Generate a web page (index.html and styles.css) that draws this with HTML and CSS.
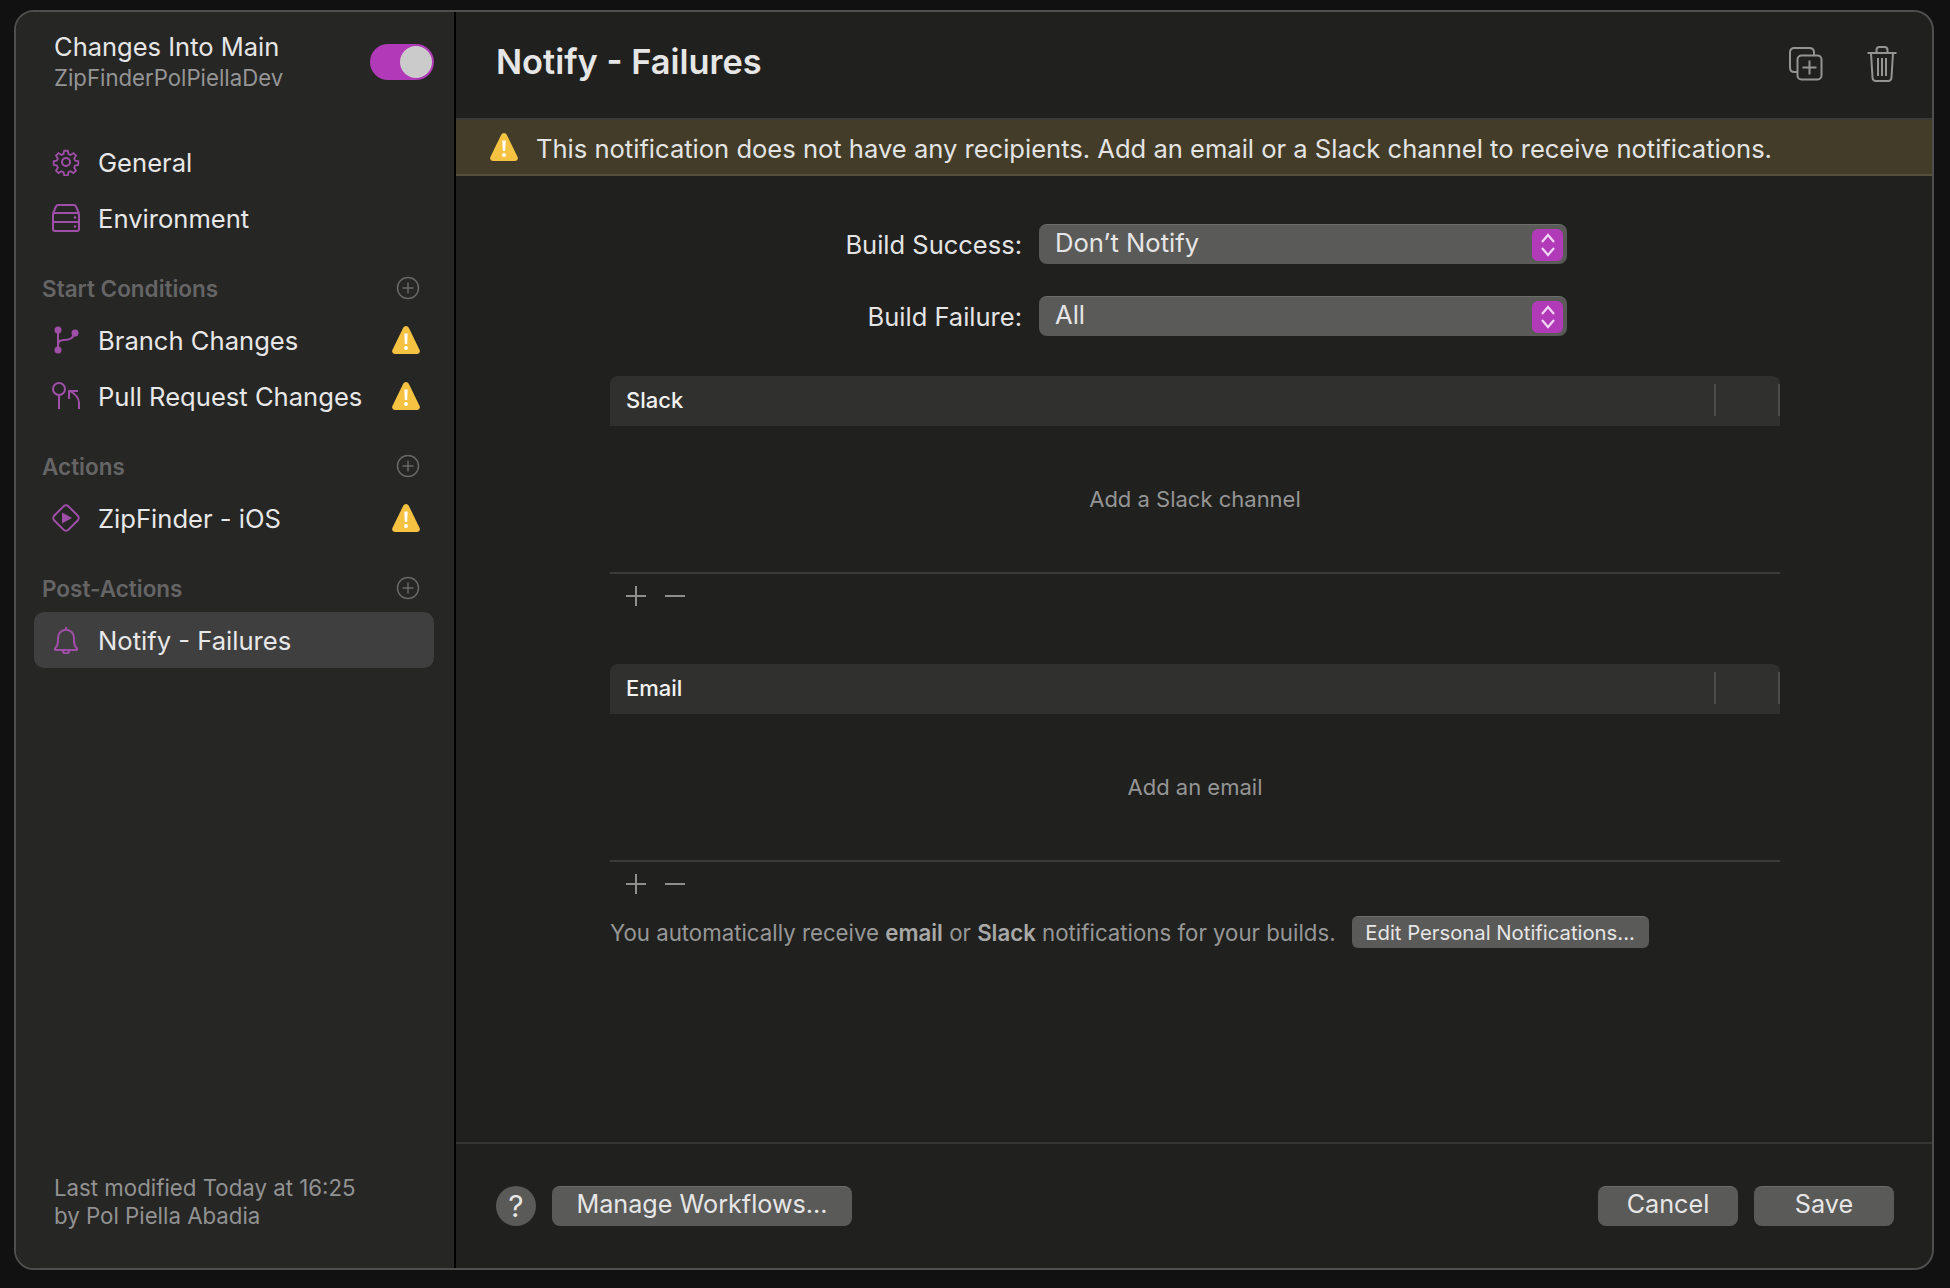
FILE: index.html
```html
<!DOCTYPE html>
<html>
<head>
	<meta charset="utf-8">
	<title>Notify - Failures</title>
	<link rel="stylesheet" href="styles.css">
</head>
<body>
	<div class="window">
		<aside class="sidebar">
			<div class="wfHead">
				<div>
					<div class="wfName">Changes Into Main</div>
					<div class="wfRepo">ZipFinderPolPiellaDev</div>
				</div>
				<div class="toggle"><span class="knob"></span></div>
			</div>
			<div class="navGroup">
				<div class="navItem">
					<svg class="navIcon" viewBox="0 0 28 28"><circle cx="14" cy="14" r="4"/><path d="M12 1.500h4l.8 3.600 2.300 1 3.200-2 2.800 2.800-2 3.200 1 2.300 3.600.8v4l-3.600.8-1 2.300 2 3.200-2.800 2.800-3.200-2-2.300 1-.8 3.600h-4l-.8-3.600-2.300-1-3.200 2-2.800-2.800 2-3.200-1-2.300-3.600-.8v-4l3.600-.8 1-2.300-2-3.200 2.800-2.800 3.200 2 2.300-1z" transform="translate(1.400 1.400) scale(.9)"/></svg>
					<span>General</span>
				</div>
				<div class="navItem">
					<svg class="navIcon" viewBox="0 0 28 28"><path d="M1 9.500 4 2.500Q4.500 1 6.500 1h15q2 0 2.500 1.500l3 7"/><rect x="1" y="9" width="26" height="18" rx="2"/><path d="M1 18h26"/><circle class="dot" cx="23" cy="13.500" r="1.300"/><circle class="dot" cx="23" cy="22.500" r="1.300"/></svg>
					<span>Environment</span>
				</div>
			</div>
			<div class="navTitle">
				<span>Start Conditions</span>
				<svg class="addIcon" viewBox="0 0 24 24"><circle cx="12" cy="12" r="10.500"/><path d="M12 6.500v11M6.500 12h11"/></svg>
			</div>
			<div class="navItem">
				<svg class="navIcon" viewBox="0 0 28 28"><path d="M6 4v20M6 19q0-5 6-5 9 0 11-7"/><circle class="dot" cx="6" cy="4" r="3.500"/><circle class="dot" cx="23" cy="7" r="3.500"/><circle class="dot" cx="6" cy="24" r="3.500"/></svg>
				<span class="navText">Branch Changes</span>
				<svg class="warnIcon" viewBox="0 0 28 28"><use href="#warn"/></svg>
			</div>
			<div class="navItem">
				<svg class="navIcon" viewBox="0 0 28 28"><circle cx="7" cy="7" r="6"/><path d="M7 13v14M27 27v-6q0-7-9-12M17 17V9h9"/></svg>
				<span class="navText">Pull Request Changes</span>
				<svg class="warnIcon" viewBox="0 0 28 28"><use href="#warn"/></svg>
			</div>
			<div class="navTitle">
				<span>Actions</span>
				<svg class="addIcon" viewBox="0 0 24 24"><circle cx="12" cy="12" r="10.500"/><path d="M12 6.500v11M6.500 12h11"/></svg>
			</div>
			<div class="navItem">
				<svg class="navIcon" viewBox="0 0 28 28"><rect x="4" y="4" width="20" height="20" rx="3.500" transform="rotate(45 14 14)"/><path class="dot" d="M10 8.500 20 14 10 19.500z"/></svg>
				<span class="navText">ZipFinder - iOS</span>
				<svg class="warnIcon" viewBox="0 0 28 28"><use href="#warn"/></svg>
			</div>
			<div class="navTitle">
				<span>Post-Actions</span>
				<svg class="addIcon" viewBox="0 0 24 24"><circle cx="12" cy="12" r="10.500"/><path d="M12 6.500v11M6.500 12h11"/></svg>
			</div>
			<div class="navItem navItemOn">
				<svg class="navIcon" viewBox="0 0 28 28"><path d="M3 22.500q3-3 3-7.500v-3q0-7 8-8.500 8 1.500 8 8.500v3q0 4.500 3 7.500 .5 1.500-1 1.500h-20q-1.500 0-1-1.500zM14 1v2.500M10.500 24q.5 3.500 3.500 3.500t3.500-3.500"/></svg>
				<span>Notify - Failures</span>
			</div>
			<div class="modified">Last modified Today at 16:25<br>by Pol Piella Abadia</div>
		</aside>
		<main class="main">
			<header class="mainHead">
				<h1>Notify - Failures</h1>
				<div class="headIcons">
					<svg class="dupIcon" viewBox="0 0 34 34"><path d="M8 25H5.500Q1 25 1 20.500v-15Q1 1 5.500 1h15Q25 1 25 5.500V8"/><rect x="8.500" y="8.500" width="24" height="24" rx="4"/><path d="M20.500 13.500v14M13.500 20.500h14"/></svg>
					<svg class="trashIcon" viewBox="0 0 30 36"><path d="M.5 7h29M9.500 7V4q0-3 3-3h5q3 0 3 3v3M4 7l1.500 24.500q.2 3.500 3.500 3.500h12q3.300 0 3.500-3.500L26 7M11 12v18M15 12v18M19 12v18"/></svg>
				</div>
			</header>
			<div class="banner">
				<svg class="warnIcon" viewBox="0 0 28 28"><use href="#warn"/></svg>
				<span class="bannerText">This notification does not have any recipients. Add an email or a Slack channel to receive notifications.</span>
			</div>
			<div class="content">
				<div class="formRow">
					<label>Build Success:</label>
					<div class="select">
						<span>Don’t Notify</span>
						<span class="stepper"><svg viewBox="0 0 16 28"><path d="M2 11 8 4l6 7M2 17l6 7 6-7"/></svg></span>
					</div>
				</div>
				<div class="formRow">
					<label>Build Failure:</label>
					<div class="select">
						<span>All</span>
						<span class="stepper"><svg viewBox="0 0 16 28"><path d="M2 11 8 4l6 7M2 17l6 7 6-7"/></svg></span>
					</div>
				</div>
				<section class="list listFirst">
					<div class="listHead"><span>Slack</span><i class="colLine"></i><i class="colLine colLast"></i></div>
					<div class="listBody">Add a Slack channel</div>
					<div class="listTools"><svg viewBox="0 0 60 22"><path d="M11 1v20M1 11h20M40 11h20"/></svg></div>
				</section>
				<section class="list listSecond">
					<div class="listHead"><span>Email</span><i class="colLine"></i><i class="colLine colLast"></i></div>
					<div class="listBody">Add an email</div>
					<div class="listTools"><svg viewBox="0 0 60 22"><path d="M11 1v20M1 11h20M40 11h20"/></svg></div>
				</section>
				<div class="note">
					<span>You automatically receive <b>email</b> or <b>Slack</b> notifications for your builds.</span>
					<button class="btn btnSmall">Edit Personal Notifications...</button>
				</div>
			</div>
			<footer class="mainFoot">
				<button class="help">?</button>
				<button class="btn btnManage">Manage Workflows...</button>
				<div class="footRight">
					<button class="btn btnWide">Cancel</button>
					<button class="btn btnWide">Save</button>
				</div>
			</footer>
		</main>
	</div>
	<svg class="defs" width="0" height="0">
		<symbol id="warn" viewBox="0 0 28 28">
			<path fill="#f5c242" d="M14 0q1.800 0 2.800 1.800L27.600 24q1 3.500-2.400 4H2.800Q-.6 27.500.4 24L11.200 1.800Q12.200 0 14 0z"/>
			<path fill="#fff" d="M12.300 7.500h3.400l-.5 10.500h-2.400z"/>
			<circle fill="#fff" cx="14" cy="22" r="2"/>
		</symbol>
	</svg>
</body>
</html>
```

FILE: styles.css
```css
* {
	box-sizing: border-box;
}
html, body {
	margin: 0;
	height: 100%;
}
body {
	padding: 10px 16px 18px 14px;
	background-color: #111;
	font-family: Inter, "Liberation Sans", sans-serif;
	color: #e4e4e4;
}
.defs {
	display: none;
}
.window {
	display: flex;
	height: 1260px;
	overflow: hidden;
	border: 2px solid #4e4e4e;
	border-radius: 20px;
	background-color: #20201e;
}

/* sidebar */
.sidebar {
	display: flex;
	flex-direction: column;
	width: 440px;
	flex: none;
	padding: 0 20px 0 18px;
	border-right: 2px solid #000;
	background-color: #262625;
}
.wfHead {
	display: flex;
	justify-content: space-between;
	align-items: center;
	height: 86px;
	padding: 13px 0 0 20px;
}
.wfName {
	font-size: 25.500px;
	line-height: 32px;
	color: #e6e6e6;
}
.wfRepo {
	font-size: 22.200px;
	line-height: 30px;
	color: #959595;
}
.toggle {
	display: flex;
	justify-content: flex-end;
	align-items: center;
	width: 64px;
	height: 36px;
	padding-right: 2px;
	border-radius: 18px;
	background-color: #b03ab8;
}
.knob {
	width: 32px;
	height: 32px;
	border-radius: 50%;
	background-color: #cbcbcb;
}
.navGroup {
	margin-top: 36px;
}
.navItem {
	display: flex;
	align-items: center;
	height: 56px;
	padding: 0 14px 0 18px;
	border-radius: 10px;
	font-size: 25.600px;
	color: #e8e8e8;
}
.navItemOn {
	background-color: #403f3f;
}
.navIcon {
	width: 28px;
	height: 28px;
	flex: none;
	margin-right: 18px;
	fill: none;
	stroke: #a04fa8;
	stroke-width: 2;
}
.navIcon .dot {
	fill: #a04fa8;
	stroke: none;
}
.navText {
	flex: 1;
}
.warnIcon {
	width: 28px;
	height: 28px;
	flex: none;
}
.navTitle {
	display: flex;
	justify-content: space-between;
	align-items: center;
	height: 40px;
	margin-top: 22px;
	margin-bottom: 4px;
	padding: 0 14px 0 8px;
	font-size: 22.500px;
	font-weight: 600;
	color: #656565;
}
.addIcon {
	width: 24px;
	height: 24px;
	fill: none;
	stroke: #686868;
	stroke-width: 1.500;
}
.modified {
	margin-top: auto;
	margin-bottom: 38px;
	padding-left: 20px;
	font-size: 22.250px;
	line-height: 28px;
	color: #929292;
}

/* main panel */
.main {
	display: flex;
	flex-direction: column;
	flex: 1;
	min-width: 0;
}
.mainHead {
	display: flex;
	justify-content: space-between;
	align-items: center;
	height: 106px;
	padding: 0 35px 8px 40px;
}
.mainHead h1 {
	margin: 0;
	font-size: 34.400px;
	font-weight: 600;
	color: #e6e6e6;
}
.headIcons {
	display: flex;
	align-items: center;
	gap: 44px;
	padding-top: 6px;
}
.headIcons svg {
	fill: none;
	stroke: #949494;
	stroke-width: 2;
}
.dupIcon {
	width: 34px;
	height: 34px;
}
.trashIcon {
	width: 30px;
	height: 36px;
}
.banner {
	display: flex;
	align-items: center;
	gap: 18px;
	height: 58px;
	padding: 0 0 0 34px;
	border-top: 2px solid #3a3a38;
	border-bottom: 2px solid #55503a;
	background-color: #423c28;
	font-size: 25.550px;
	color: #e4e4e4;
}
.bannerText {
	padding-top: 2px;
}
.content {
	flex: 1;
	padding-top: 48px;
}
.formRow {
	display: flex;
	align-items: center;
	height: 40px;
	margin-bottom: 32px;
}
.formRow label {
	width: 566px;
	margin-right: 17px;
	text-align: right;
	font-size: 25.500px;
	color: #e4e4e4;
}
.select {
	display: flex;
	justify-content: space-between;
	align-items: center;
	width: 528px;
	height: 40px;
	padding: 0 4px 0 16px;
	border-top: 1px solid #6c6c6c;
	border-radius: 8px;
	background-color: #5a5a59;
	font-size: 25.600px;
	color: #e6e6e6;
}
.select > span:first-child {
	padding-bottom: 5px;
}
.stepper {
	display: flex;
	justify-content: center;
	align-items: center;
	width: 31px;
	height: 32px;
	border-radius: 6px;
	background-color: #b03ab8;
}
.stepper svg {
	width: 16px;
	height: 28px;
	fill: none;
	stroke: #f0d6f2;
	stroke-width: 2.200;
}
.list {
	width: 1170px;
	margin-left: 154px;
}
.listFirst {
	margin-top: 40px;
}
.listSecond {
	margin-top: 48px;
}
.listHead {
	display: flex;
	align-items: center;
	height: 50px;
	padding-left: 16px;
	padding-bottom: 2px;
	border-radius: 8px 8px 0 0;
	background-color: #30302f;
	font-size: 22px;
	font-weight: 500;
	color: #f2f2f2;
}
.listHead span {
	flex: 1;
}
.colLine {
	width: 2px;
	height: 32px;
	margin-right: 62px;
	background-color: #4c4c4c;
}
.colLast {
	margin-right: 0;
}
.listBody {
	display: flex;
	justify-content: center;
	align-items: center;
	height: 148px;
	border-bottom: 2px solid #3c3c3b;
	font-size: 22px;
	color: #959595;
}
.listTools {
	display: flex;
	align-items: center;
	height: 42px;
	padding: 2px 0 0 15px;
}
.listTools svg {
	width: 60px;
	height: 22px;
	fill: none;
	stroke: #8f8f8f;
	stroke-width: 2;
}
.note {
	display: flex;
	align-items: center;
	gap: 16px;
	margin-top: 12px;
	margin-left: 154px;
	font-size: 22.250px;
	color: #979797;
}
.note b {
	font-weight: 600;
	color: #a8a8a8;
}
.btn {
	height: 40px;
	padding: 0 0 5px;
	border: 0 none;
	border-top: 1px solid #6c6c6c;
	border-radius: 8px;
	background-color: #5a5a59;
	font-family: inherit;
	font-size: 25.200px;
	color: #e6e6e6;
}
.btnSmall {
	width: 297px;
	height: 32px;
	padding: 0;
	font-size: 20.300px;
	border-radius: 6px;
}
.mainFoot {
	display: flex;
	align-items: center;
	gap: 16px;
	height: 126px;
	padding: 0 38px 0 40px;
	border-top: 2px solid #363635;
}
.help {
	width: 40px;
	height: 40px;
	padding: 0;
	border: 0 none;
	border-radius: 50%;
	background-color: #5a5a59;
	font-family: inherit;
	font-size: 30px;
	color: #e6e6e6;
}
.btnManage {
	width: 300px;
}
.footRight {
	display: flex;
	gap: 16px;
	margin-left: auto;
}
.btnWide {
	width: 140px;
}
```
